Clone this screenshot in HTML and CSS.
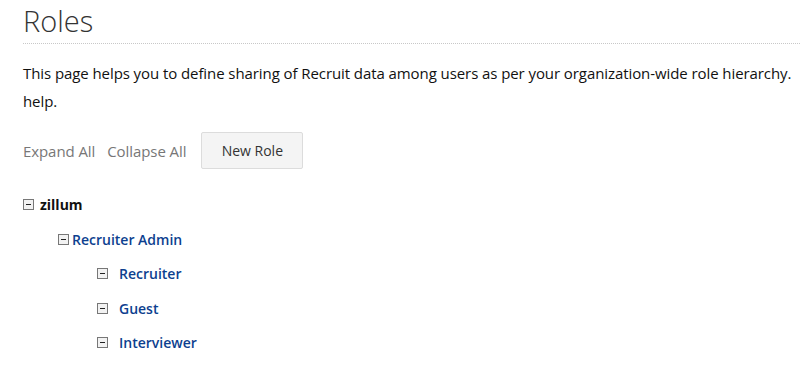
FILE: index.html
```html
<!DOCTYPE html>
<html lang="en">
<head>
  <meta charset="UTF-8" />
  <title>Roles</title>
  <link rel="stylesheet" href="styles.css">
</head>
<body>

<div class="page">
  <h1 class="page-title">Roles</h1>

  <p class="intro">This page helps you to define sharing of Recruit data among users as per your organization-wide role hierarchy. help.</p>

  <div class="toolbar">
    <a class="tool-link" href="#">Expand All</a>
    <a class="tool-link" href="#">Collapse All</a>
    <button class="btn">New Role</button>
  </div>

  <ul class="tree">
    <li class="node root">
      <div class="row"><span class="toggle"></span><span class="label">zillum</span></div>
      <ul class="tree level-1">
        <li class="node">
          <div class="row"><span class="toggle"></span><a class="label" href="#">Recruiter Admin</a></div>
          <ul class="tree level-2">
            <li class="node"><div class="row"><span class="toggle"></span><a class="label" href="#">Recruiter</a></div></li>
            <li class="node"><div class="row"><span class="toggle"></span><a class="label" href="#">Guest</a></div></li>
            <li class="node"><div class="row"><span class="toggle"></span><a class="label" href="#">Interviewer</a></div></li>
          </ul>
        </li>
      </ul>
    </li>
  </ul>
</div>

</body>
</html>
```

FILE: styles.css
```css
body {
  margin: 0;
  font-family: "Open Sans", sans-serif;
  background: #fff;
  color: #222;
}

.page {
  padding: 0 0 0 23px;
}

.page-title {
  margin: 0;
  padding: 3px 0 4px;
  font-size: 29px;
  font-weight: 300;
  line-height: 36px;
  color: #333;
  border-bottom: 1px dotted #c8c8c8;
}

.intro {
  margin: 15px 0 0;
  width: 775px;
  font-size: 15px;
  letter-spacing: -0.08px;
  line-height: 28px;
  color: #111;
}

.toolbar {
  display: flex;
  align-items: center;
  margin-top: 17px;
}

.tool-link {
  font-size: 15px;
  letter-spacing: -0.08px;
  color: #777;
  text-decoration: none;
  margin-right: 12px;
}

.btn {
  margin-left: 3px;
  width: 102px;
  height: 37px;
  background: #f4f4f4;
  border: 1px solid #dcdcdc;
  border-radius: 2px;
  font-family: "Open Sans", sans-serif;
  font-size: 14px;
  color: #333;
}

.tree {
  list-style: none;
  margin: 0;
  padding: 0;
}

.root {
  margin-top: 18px;
}

.row {
  display: flex;
  align-items: center;
  height: 34.5px;
}

.root > .row {
  height: 35px;
}

.toggle {
  position: relative;
  width: 9px;
  height: 9px;
  border: 1px solid #777;
  background: #f2f2f2;
  margin-right: 6px;
}

.toggle::after {
  content: "";
  position: absolute;
  left: 2px;
  top: 4px;
  width: 5px;
  height: 1px;
  background: #222;
}

.label {
  font-size: 14px;
  font-weight: 700;
  color: #111;
  text-decoration: none;
}

a.label {
  font-weight: 600;
  color: #0d3f8f;
}

.level-1 {
  padding-left: 35px;
}

.level-1 > .node > .row .toggle {
  margin-right: 3px;
}

.level-2 {
  padding-left: 39px;
}

.level-2 .toggle {
  margin-right: 11px;
}
```
